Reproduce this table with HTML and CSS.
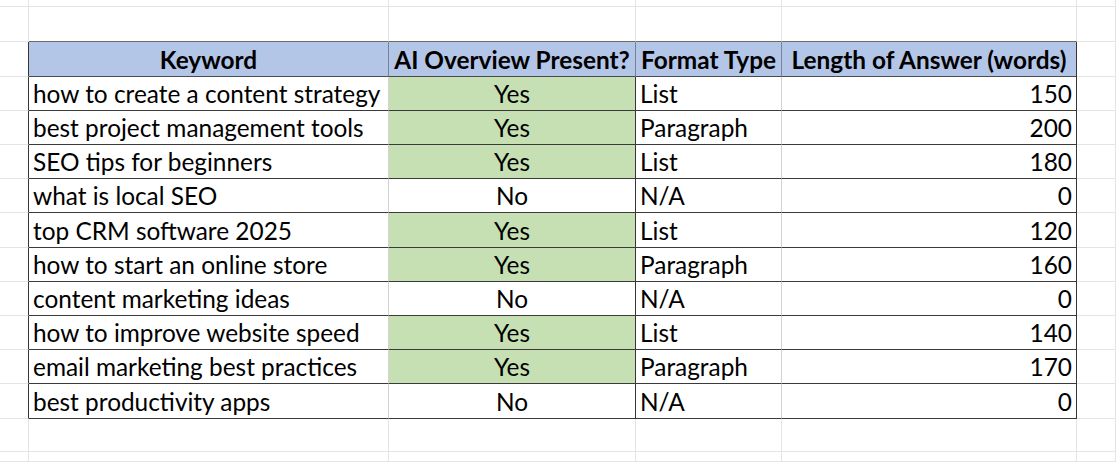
FILE: index.html
```html
<!DOCTYPE html>
<html lang="en">
<head>
<meta charset="utf-8">
<title>AI Overview keywords</title>
<link rel="stylesheet" href="styles.css">
</head>
<body>
<div class="sheet">
  <div class="row r-top">
    <div class="c"></div><div class="c"></div><div class="c"></div><div class="c"></div><div class="c"></div><div class="c"></div>
  </div>
  <div class="row r-pre">
    <div class="c"></div><div class="c ht"></div><div class="c ht"></div><div class="c ht"></div><div class="c ht"></div><div class="c"></div>
  </div>
  <div class="row r-head">
    <div class="c edge"></div>
    <div class="c hd hsep">Keyword</div>
    <div class="c hd hsep">AI Overview Present?</div>
    <div class="c hd hsep">Format Type</div>
    <div class="c hd edge">Length of Answer (words)</div>
    <div class="c"></div>
  </div>

  <div class="row r-data">
    <div class="c edge"></div>
    <div class="c td kw inner">how to create a content strategy</div>
    <div class="c td mid yes edge">Yes</div>
    <div class="c td kw inner">List</div>
    <div class="c td num edge">150</div>
    <div class="c"></div>
  </div>
  <div class="row r-data">
    <div class="c edge"></div>
    <div class="c td kw inner">best project management tools</div>
    <div class="c td mid yes edge">Yes</div>
    <div class="c td kw inner">Paragraph</div>
    <div class="c td num edge">200</div>
    <div class="c"></div>
  </div>
  <div class="row r-data">
    <div class="c edge"></div>
    <div class="c td kw inner">SEO tips for beginners</div>
    <div class="c td mid yes edge">Yes</div>
    <div class="c td kw inner">List</div>
    <div class="c td num edge">180</div>
    <div class="c"></div>
  </div>
  <div class="row r-data">
    <div class="c edge"></div>
    <div class="c td kw inner">what is local SEO</div>
    <div class="c td mid edge">No</div>
    <div class="c td kw inner">N/A</div>
    <div class="c td num edge">0</div>
    <div class="c"></div>
  </div>
  <div class="row r-data r-tall">
    <div class="c edge"></div>
    <div class="c td kw inner">top CRM software 2025</div>
    <div class="c td mid yes edge">Yes</div>
    <div class="c td kw inner">List</div>
    <div class="c td num edge">120</div>
    <div class="c"></div>
  </div>
  <div class="row r-data">
    <div class="c edge"></div>
    <div class="c td kw inner">how to start an online store</div>
    <div class="c td mid yes edge">Yes</div>
    <div class="c td kw inner">Paragraph</div>
    <div class="c td num edge">160</div>
    <div class="c"></div>
  </div>
  <div class="row r-data">
    <div class="c edge"></div>
    <div class="c td kw inner">content marketing ideas</div>
    <div class="c td mid edge">No</div>
    <div class="c td kw inner">N/A</div>
    <div class="c td num edge">0</div>
    <div class="c"></div>
  </div>
  <div class="row r-data">
    <div class="c edge"></div>
    <div class="c td kw inner">how to improve website speed</div>
    <div class="c td mid yes edge">Yes</div>
    <div class="c td kw inner">List</div>
    <div class="c td num edge">140</div>
    <div class="c"></div>
  </div>
  <div class="row r-data">
    <div class="c edge"></div>
    <div class="c td kw inner">email marketing best practices</div>
    <div class="c td mid yes edge">Yes</div>
    <div class="c td kw inner">Paragraph</div>
    <div class="c td num edge">170</div>
    <div class="c"></div>
  </div>
  <div class="row r-data r-tall">
    <div class="c edge"></div>
    <div class="c td kw inner">best productivity apps</div>
    <div class="c td mid edge">No</div>
    <div class="c td kw inner">N/A</div>
    <div class="c td num edge">0</div>
    <div class="c"></div>
  </div>

  <div class="row r-post">
    <div class="c"></div><div class="c"></div><div class="c"></div><div class="c"></div><div class="c"></div><div class="c"></div>
  </div>
  <div class="row r-end">
    <div class="c"></div><div class="c"></div><div class="c"></div><div class="c"></div><div class="c"></div><div class="c"></div>
  </div>
</div>
</body>
</html>
```

FILE: styles.css
```css
html, body {
  margin: 0;
  padding: 0;
  background: #ffffff;
}

body {
  width: 1116px;
  height: 462px;
  overflow: hidden;
  font-family: Lato, "Open Sans", "Liberation Sans", sans-serif;
  color: #000000;
}

.sheet {
  display: flex;
  flex-direction: column;
}

.row {
  display: grid;
  grid-template-columns: 29px 360px 247px 146px 295px 1fr;
}

.r-top  { height: 7px; }
.r-pre  { height: 35px; }
.r-head { height: 35px; }
.r-data { height: 34px; }
.r-data.r-tall { height: 35px; }
.r-post { height: 33px; }
.r-end  { height: 10px; }

.c {
  box-sizing: border-box;
  border-right: 1px solid #e4e4e4;
  border-bottom: 1px solid #e4e4e4;
  display: flex;
  align-items: flex-end;
  min-width: 0;
  white-space: nowrap;
  overflow: hidden;
  font-size: 24.4px;
  line-height: 24px;
}

/* header top border drawn by the row above */
.ht { border-bottom-color: #6b6b6b; }

/* table outer edge / dark separators */
.edge { border-right-color: #363636; }

.hd {
  background: #b4c6e7;
  font-weight: 700;
  justify-content: center;
  padding-bottom: 4px;
  border-bottom-color: #4a4a4a;
}

.hsep { border-right-color: #7a8294; }

.td {
  padding-bottom: 4px;
  border-bottom-color: #3a3a3a;
}

.inner { border-right-color: #d2d2d2; }

.kw {
  justify-content: flex-start;
  padding-left: 4px;
}

.mid { justify-content: center; }

.num {
  justify-content: flex-end;
  padding-right: 4px;
}

.yes { background: #c6e0b4; }
```
